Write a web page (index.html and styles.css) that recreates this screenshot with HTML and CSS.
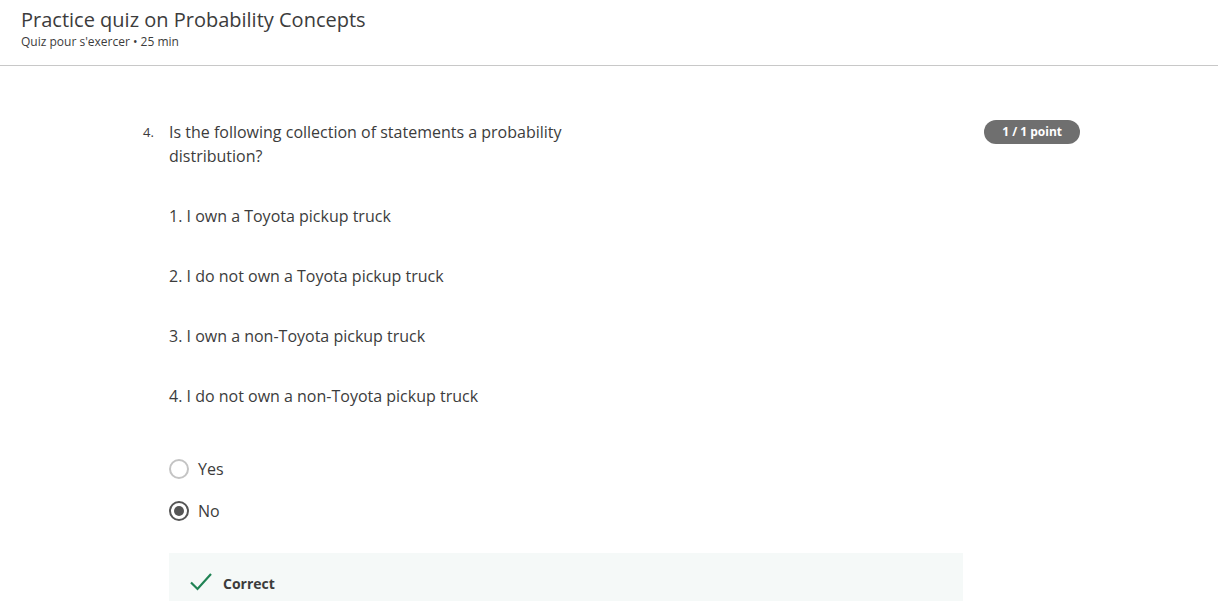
FILE: index.html
```html
<!DOCTYPE html>
<html lang="en">
<head>
<meta charset="utf-8">
<title>Practice quiz on Probability Concepts</title>
<link rel="stylesheet" href="styles.css">
</head>
<body>
<header class="top">
  <h1 class="title">Practice quiz on Probability Concepts</h1>
  <div class="subtitle">Quiz pour s'exercer • 25 min</div>
</header>
<main class="main">
  <div class="question">
    <div class="qnum">4.</div>
    <div class="qbody">
      <div class="qhead">
        <p class="prompt">Is the following collection of statements a probability distribution?</p>
        <span class="pill">1 / 1 point</span>
      </div>
      <div class="statements">
        <p>1. I own a Toyota pickup truck</p>
        <p>2. I do not own a Toyota pickup truck</p>
        <p>3. I own a non-Toyota pickup truck</p>
        <p>4. I do not own a non-Toyota pickup truck</p>
      </div>
      <div class="options">
        <label class="option"><span class="radio"></span><span>Yes</span></label>
        <label class="option"><span class="radio checked"></span><span>No</span></label>
      </div>
      <div class="feedback">
        <svg class="check" width="24" height="24" viewBox="0 0 24 24"><path d="M2 12.5 L8.5 19 L22 4" fill="none" stroke="#1f8354" stroke-width="2.2"/></svg>
        <span class="fb-text">Correct</span>
      </div>
    </div>
  </div>
</main>
</body>
</html>
```
FILE: styles.css
```css
* { box-sizing: border-box; }
body {
  margin: 0;
  font-family: "Open Sans", "Noto Sans", sans-serif;
  color: #3c3c3c;
  background: #fff;
}
.top {
  padding: 6px 21px 15px;
  border-bottom: 1px solid #c8c8c8;
}
.title {
  margin: 0;
  font-size: 20px;
  font-weight: 400;
  line-height: 28px;
}
.subtitle {
  font-size: 12px;
  line-height: 16px;
}
.main {
  padding: 54px 0 0 143px;
}
.question {
  display: flex;
  width: 937px;
}
.qnum {
  width: 26px;
  font-size: 13px;
  line-height: 24px;
}
.qbody { flex: 1; }
.qhead {
  display: flex;
  justify-content: space-between;
  align-items: flex-start;
}
.prompt {
  margin: 0;
  width: 400px;
  font-size: 16px;
  line-height: 24px;
}
.pill {
  background: #6f6f6f;
  color: #fff;
  font-size: 12px;
  font-weight: 700;
  line-height: 24px;
  height: 24px;
  padding: 0 18px;
  border-radius: 12px;
}
.statements {
  display: flex;
  flex-direction: column;
  gap: 36px;
  margin-top: 36px;
}
.statements p {
  margin: 0;
  font-size: 16px;
  line-height: 24px;
}
.options {
  margin-top: 40px;
  display: flex;
  flex-direction: column;
}
.option {
  display: flex;
  align-items: center;
  gap: 9px;
  height: 42px;
  font-size: 16px;
}
.radio {
  width: 20px;
  height: 20px;
  border-radius: 50%;
  border: 2px solid #c4c4c4;
  display: flex;
  align-items: center;
  justify-content: center;
}
.radio.checked { border-color: #555; }
.radio.checked::after {
  content: "";
  width: 10px;
  height: 10px;
  border-radius: 50%;
  background: #555;
}
.feedback {
  margin-top: 21px;
  width: 794px;
  height: 60px;
  background: #f5f9f8;
  display: flex;
  align-items: center;
  padding: 0 0 0 20px;
  gap: 10px;
}
.check { margin-top: -2px; }
.fb-text {
  font-size: 14px;
  font-weight: 700;
}
```
